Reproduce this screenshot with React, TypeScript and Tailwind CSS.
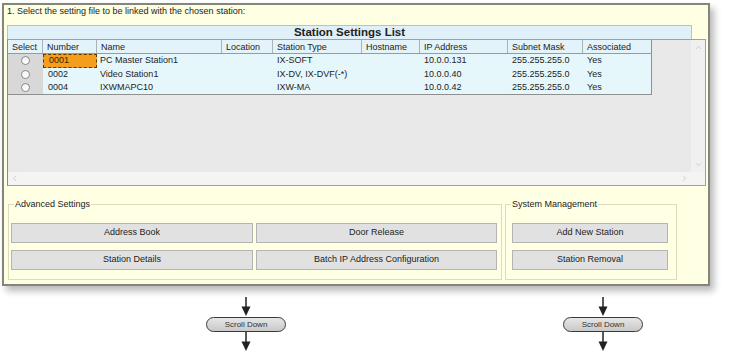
import { ChevronUp, ChevronDown, ChevronLeft, ChevronRight } from "lucide-react";

const columns = [
  { label: "Select", w: "w-[35px]" },
  { label: "Number", w: "w-[54px]" },
  { label: "Name", w: "w-[125px]" },
  { label: "Location", w: "w-[51px]" },
  { label: "Station Type", w: "w-[89px]" },
  { label: "Hostname", w: "w-[58px]" },
  { label: "IP Address", w: "w-[88px]" },
  { label: "Subnet Mask", w: "w-[75px]" },
  { label: "Associated", w: "w-[68px]" },
];

const stations = [
  { num: "0001", name: "PC Master Station1", type: "IX-SOFT", ip: "10.0.0.131" },
  { num: "0002", name: "Video Station1", type: "IX-DV, IX-DVF(-*)", ip: "10.0.0.40" },
  { num: "0004", name: "IXWMAPC10", type: "IXW-MA", ip: "10.0.0.42" },
];

function Arrow() {
  return (
    <svg width="14" height="20" viewBox="0 0 14 20">
      <line x1="7" y1="0" x2="7" y2="11" stroke="#222" strokeWidth="1.5" />
      <polygon points="2.5,9.5 11.5,9.5 7,19" fill="#222" />
    </svg>
  );
}

function ScrollDown() {
  return (
    <div className="flex flex-col items-center w-[80px]">
      <Arrow />
      <div className="w-[80px] h-[15px] rounded-full border-[1.5px] border-[#3a3a3a] bg-gradient-to-b from-[#e6e6e6] to-[#c9c9c9] flex items-center justify-center text-[8px] text-[#333]">
        Scroll Down
      </div>
      <Arrow />
    </div>
  );
}

function Btn({ label, w }: { label: string; w: string }) {
  return (
    <button className={`${w} h-[20px] bg-[#e1e1e1] border border-[#b4b4b4] text-[9px] text-[#222] flex items-center justify-center`}>
      {label}
    </button>
  );
}

export default function App() {
  return (
    <div className="w-[730px] h-[359px] bg-white overflow-hidden font-['Liberation_Sans',Arial,sans-serif] text-[#222]">
      {/* Main panel */}
      <div className="ml-[2px] mt-[3px] w-[708px] h-[283px] border-2 border-[#85857a] bg-[#ffffe3] shadow-[4px_5px_7px_rgba(0,0,0,0.28)] flex flex-col">
        <div className="pl-[3px] h-[13px] leading-[13px] text-[9px]">
          1. Select the setting file to be linked with the chosen station:
        </div>

        <div className="ml-[3px] mt-[7px] w-[685px] h-[14px] border border-b-0 border-[#a9c6d3] bg-[#dff0f8] text-center font-bold text-[11.5px] leading-[13px]">
          Station Settings List
        </div>

        {/* Grid */}
        <div className="ml-[3px] w-[699px] h-[147px] border border-[#a0a0a0] border-l-[#8a8a8a] flex flex-col bg-[#e9e9e9]">
          <div className="flex flex-1">
            <div className="flex-1 flex flex-col">
              <div className="flex h-[14px] bg-[#e4f3f9] border-b border-[#9a9a9a] w-[644px] border-r border-r-[#8f8f8f]">
                {columns.map((c) => (
                  <div key={c.label} className={`${c.w} shrink-0 pl-[4px] text-[9px] leading-[14px] border-r border-[#a8b4ba] last:border-r-0`}>
                    {c.label}
                  </div>
                ))}
              </div>
              {stations.map((s, i) => (
                <div key={s.num} className="flex h-[13.5px] w-[644px] bg-[#e6f7fc] border-r border-[#8f8f8f] last:border-b text-[9px] leading-[13px]">
                  <div className="w-[35px] shrink-0 bg-[#d8d8d8] flex items-center justify-center">
                    <span className="w-[9px] h-[9px] rounded-full border border-[#8a8a8a] bg-gradient-to-b from-[#f4f4f4] to-[#ffffff]" />
                  </div>
                  <div
                    className={`w-[54px] shrink-0 pl-[5px] ${
                      i === 0 ? "bg-[#f59d1c] border border-dashed border-[#5a3a00] leading-[11px] text-[#3a2400]" : ""
                    }`}
                  >
                    {s.num}
                  </div>
                  <div className="w-[125px] shrink-0 pl-[3px]">{s.name}</div>
                  <div className="w-[51px] shrink-0" />
                  <div className="w-[89px] shrink-0 pl-[4px]">{s.type}</div>
                  <div className="w-[58px] shrink-0" />
                  <div className="w-[88px] shrink-0 pl-[4px]">{s.ip}</div>
                  <div className="w-[75px] shrink-0 pl-[4px]">255.255.255.0</div>
                  <div className="w-[68px] shrink-0 pl-[4px]">Yes</div>
                </div>
              ))}
            </div>
            <div className="w-[14px] bg-[#f0f0f0] flex flex-col items-center justify-between py-[3px]">
              <ChevronUp size={9} color="#b0b0b0" strokeWidth={1.5} />
              <ChevronDown size={9} color="#b0b0b0" strokeWidth={1.5} />
            </div>
          </div>
          <div className="h-[13px] bg-[#f4f4f4] flex items-center justify-between pl-[2px] pr-[16px]">
            <ChevronLeft size={9} color="#b0b0b0" strokeWidth={1.5} />
            <ChevronRight size={9} color="#b0b0b0" strokeWidth={1.5} />
          </div>
        </div>

        {/* Bottom group boxes */}
        <div className="flex mt-[13px] ml-[4px]">
          <fieldset className="w-[494px] h-[81px] border border-[#dcdbbd]">
            <legend className="ml-[5px] px-[1px] text-[9px] leading-[11px]">Advanced Settings</legend>
            <div className="grid grid-cols-[242px_241px] gap-x-[3px] gap-y-[7px] pl-[2px] mt-[13px]">
              <Btn label="Address Book" w="w-[242px]" />
              <Btn label="Door Release" w="w-[241px]" />
              <Btn label="Station Details" w="w-[242px]" />
              <Btn label="Batch IP Address Configuration" w="w-[241px]" />
            </div>
          </fieldset>
          <fieldset className="ml-[3px] w-[172px] h-[81px] border border-[#dcdbbd]">
            <legend className="ml-[5px] px-[1px] text-[9px] leading-[11px]">System Management</legend>
            <div className="flex flex-col gap-y-[7px] pl-[6px] mt-[13px]">
              <Btn label="Add New Station" w="w-[156px]" />
              <Btn label="Station Removal" w="w-[156px]" />
            </div>
          </fieldset>
        </div>
      </div>

      {/* Scroll indicators */}
      <div className="flex mt-[11px] ml-[206px] gap-[277px]">
        <ScrollDown />
        <ScrollDown />
      </div>
    </div>
  );
}
